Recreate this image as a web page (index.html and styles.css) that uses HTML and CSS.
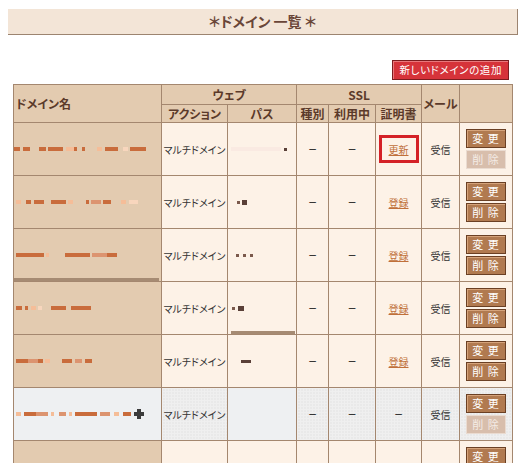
FILE: index.html
```html
<!DOCTYPE html>
<html lang="ja">
<head>
    <meta charset="UTF-8">
    <title>ドメイン一覧</title>
    <link rel="stylesheet" href="styles.css">
</head>
<body>
    <div class="title">＊ドメイン 一覧 ＊</div>

    <div class="toolbar">
        <span class="add-btn">新しいドメインの追加</span>
    </div>

    <table class="domains">
        <colgroup>
            <col style="width:148px">
            <col style="width:66px">
            <col style="width:69px">
            <col style="width:32px">
            <col style="width:47px">
            <col style="width:46px">
            <col style="width:38px">
            <col style="width:53px">
        </colgroup>
        <thead>
            <tr class="head1">
                <th rowspan="2" class="name">ドメイン名</th>
                <th colspan="2">ウェブ</th>
                <th colspan="3">SSL</th>
                <th rowspan="2">メール</th>
                <th rowspan="2"></th>
            </tr>
            <tr class="head2">
                <th>アクション</th>
                <th>パス</th>
                <th>種別</th>
                <th>利用中</th>
                <th>証明書</th>
            </tr>
        </thead>
        <tbody>
            <!-- ドメイン名・パスはぼかし表示 -->
            <tr>
                <td class="name"><span class="blur"><i class="d" style="width:6px"></i><i class="g" style="width:3px"></i><i class="d" style="width:7px"></i><i class="g" style="width:9px"></i><i class="d" style="width:7px"></i><i class="g" style="width:2px"></i><i class="d" style="width:15px"></i><i class="g" style="width:3px"></i><i class="l" style="width:8px"></i><i class="d" style="width:3px"></i><i class="g" style="width:5px"></i><i class="d" style="width:3px"></i><i class="g" style="width:12px"></i><i class="l" style="width:5px"></i><i class="g" style="width:3px"></i><i class="d" style="width:13px"></i><i class="g" style="width:5px"></i><i class="p" style="width:5px"></i><i class="g" style="width:2px"></i><i class="d" style="width:16px"></i></span></td>
                <td>マルチドメイン</td>
                <td class="path"><span class="blur"><i class="f" style="width:50px"></i><i class="g" style="width:3px"></i><i class="k" style="width:3px;height:3px"></i></span></td>
                <td class="dash">–</td>
                <td class="dash">–</td>
                <td><span class="mark"><a href="#">更新</a></span></td>
                <td>受信</td>
                <td class="ops"><span class="btn">変 更</span><span class="btn off">削 除</span></td>
            </tr>
            <tr>
                <td class="name"><span class="blur"><i class="g" style="width:2px"></i><i class="l" style="width:5px"></i><i class="g" style="width:5px"></i><i class="d" style="width:5px"></i><i class="g" style="width:3px"></i><i class="d" style="width:10px"></i><i class="g" style="width:7px"></i><i class="d" style="width:15px"></i><i class="g" style="width:2px"></i><i class="l" style="width:5px"></i><i class="g" style="width:13px"></i><i class="d" style="width:3px"></i><i class="g" style="width:2px"></i><i class="m" style="width:10px"></i><i class="g" style="width:2px"></i><i class="d" style="width:8px"></i><i class="g" style="width:10px"></i><i class="l" style="width:5px"></i><i class="g" style="width:3px"></i><i class="p" style="width:9px"></i></span></td>
                <td>マルチドメイン</td>
                <td class="path"><span class="blur"><i class="g" style="width:6px"></i><i class="k2" style="width:3px;height:3px"></i><i class="g" style="width:2px"></i><i class="k" style="width:5px;height:5px"></i></span></td>
                <td class="dash">–</td>
                <td class="dash">–</td>
                <td><a href="#">登録</a></td>
                <td>受信</td>
                <td class="ops"><span class="btn">変 更</span><span class="btn">削 除</span></td>
            </tr>
            <tr>
                <td class="name bar"><span class="blur"><i class="g" style="width:2px"></i><i class="d" style="width:28px"></i><i class="g" style="width:2px"></i><i class="l" style="width:3px"></i><i class="g" style="width:16px"></i><i class="d" style="width:25px"></i><i class="g" style="width:2px"></i><i class="m" style="width:15px"></i><i class="d" style="width:10px"></i></span></td>
                <td>マルチドメイン</td>
                <td class="path"><span class="blur"><i class="g" style="width:5px"></i><i class="k2" style="width:3px;height:3px"></i><i class="g" style="width:4px"></i><i class="k2" style="width:3px;height:3px"></i><i class="g" style="width:4px"></i><i class="k2" style="width:3px;height:3px"></i></span></td>
                <td class="dash">–</td>
                <td class="dash">–</td>
                <td><a href="#">登録</a></td>
                <td>受信</td>
                <td class="ops"><span class="btn">変 更</span><span class="btn">削 除</span></td>
            </tr>
            <tr>
                <td class="name"><span class="blur"><i class="g" style="width:2px"></i><i class="d" style="width:6px"></i><i class="g" style="width:3px"></i><i class="d" style="width:3px"></i><i class="g" style="width:3px"></i><i class="l" style="width:5px"></i><i class="g" style="width:2px"></i><i class="p" style="width:4px"></i><i class="g" style="width:9px"></i><i class="d" style="width:15px"></i><i class="g" style="width:5px"></i><i class="d" style="width:20px"></i></span></td>
                <td>マルチドメイン</td>
                <td class="path bar"><span class="blur"><i class="g" style="width:1px"></i><i class="k2" style="width:3px;height:3px"></i><i class="g" style="width:3px"></i><i class="k" style="width:6px;height:5px"></i></span></td>
                <td class="dash">–</td>
                <td class="dash">–</td>
                <td><a href="#">登録</a></td>
                <td>受信</td>
                <td class="ops"><span class="btn">変 更</span><span class="btn">削 除</span></td>
            </tr>
            <tr>
                <td class="name"><span class="blur"><i class="g" style="width:2px"></i><i class="d" style="width:12px"></i><i class="m" style="width:10px"></i><i class="d" style="width:5px"></i><i class="g" style="width:2px"></i><i class="l" style="width:5px"></i><i class="g" style="width:12px"></i><i class="d" style="width:10px"></i><i class="g" style="width:3px"></i><i class="m" style="width:7px"></i><i class="g" style="width:3px"></i><i class="d" style="width:7px"></i></span></td>
                <td>マルチドメイン</td>
                <td class="path"><span class="blur"><i class="g" style="width:10px"></i><i class="k" style="width:10px;height:3px"></i></span></td>
                <td class="dash">–</td>
                <td class="dash">–</td>
                <td><a href="#">登録</a></td>
                <td>受信</td>
                <td class="ops"><span class="btn">変 更</span><span class="btn">削 除</span></td>
            </tr>
            <tr class="gray">
                <td class="name"><span class="blur"><i class="g" style="width:2px"></i><i class="l" style="width:5px"></i><i class="g" style="width:3px"></i><i class="d" style="width:12px"></i><i class="m" style="width:12px"></i><i class="g" style="width:3px"></i><i class="l" style="width:3px"></i><i class="g" style="width:5px"></i><i class="m" style="width:7px"></i><i class="g" style="width:3px"></i><i class="l" style="width:3px"></i><i class="g" style="width:3px"></i><i class="d" style="width:22px"></i><i class="g" style="width:3px"></i><i class="m" style="width:10px"></i><i class="g" style="width:4px"></i><i class="l" style="width:5px"></i><i class="g" style="width:4px"></i><i class="d" style="width:8px"></i><i class="g" style="width:3px"></i><i class="x"></i></span></td>
                <td class="dot">マルチドメイン</td>
                <td class="path"></td>
                <td class="dot dash">–</td>
                <td class="dot dash">–</td>
                <td class="dot dash">–</td>
                <td class="dot">受信</td>
                <td class="ops dot"><span class="btn">変 更</span><span class="btn off">削 除</span></td>
            </tr>
            <tr>
                <td class="name"><span class="blur"><i class="g" style="width:2px"></i><i class="d" style="width:8px"></i><i class="g" style="width:4px"></i><i class="m" style="width:12px"></i><i class="g" style="width:6px"></i><i class="d" style="width:14px"></i><i class="g" style="width:8px"></i><i class="l" style="width:10px"></i></span></td>
                <td>マルチドメイン</td>
                <td class="path"><span class="blur"><i class="g" style="width:8px"></i><i class="k2" style="width:3px;height:3px"></i></span></td>
                <td class="dash">–</td>
                <td class="dash">–</td>
                <td><a href="#">登録</a></td>
                <td>受信</td>
                <td class="ops"><span class="btn">変 更</span><span class="btn">削 除</span></td>
            </tr>
        </tbody>
    </table>
</body>
</html>
```

FILE: styles.css
```css
body {
    margin: 9px 1px 0 8px;
    font-family: "Noto Sans CJK JP", sans-serif;
    background-color: #ffffff;
}

.title {
    height: 25px;
    line-height: 25px;
    text-align: center;
    font-size: 14px;
    font-weight: bold;
    color: #6a4638;
    background-color: #f3e5d7;
    border-right: 1px solid #9c8470;
    border-bottom: 1px solid #9c8470;
    font-feature-settings: "palt";
}

.toolbar {
    display: flex;
    justify-content: flex-end;
    margin: 25px 9px 0 0;
}

.add-btn {
    display: inline-block;
    height: 18px;
    line-height: 18px;
    padding: 0 6px 0 7px;
    font-size: 10.5px;
    letter-spacing: 0.6px;
    color: #ffffff;
    background-color: #d6333a;
    border: 1px solid #7c1c1f;
    box-shadow: inset 1px 1px 0 #e9787c;
    font-feature-settings: "palt";
}

.domains {
    margin: 4px 0 0 5px;
    width: 499px;
    border-collapse: collapse;
    table-layout: fixed;
}

.domains th {
    background-color: #e3cbb0;
    border: 1px solid #a4876f;
    color: #5b3a2a;
    font-size: 12px;
    font-weight: bold;
    padding: 0;
    font-feature-settings: "palt";
}

.domains .head1 th {
    height: 19px;
}

.domains .head2 th {
    height: 17px;
}

.domains th.name {
    text-align: left;
    padding-left: 2px;
}

.domains td {
    height: 52px;
    padding: 0;
    border: 1px solid #a4876f;
    background-color: #fdf2e7;
    text-align: center;
    vertical-align: middle;
    font-size: 10px;
    color: #333333;
    font-feature-settings: "palt";
}

.domains td.dash {
    font-family: "Liberation Sans", sans-serif;
    font-size: 12px;
    color: #2a2a2a;
}

.domains td.name {
    text-align: left;
    background-color: #e3cbb0;
    padding-left: 0;
}

.domains td.path {
    text-align: left;
    padding-left: 3px;
}

/* ぼかし由来の太い線 */
.domains td.name.bar {
    background-image: linear-gradient(#a68b73, #a68b73);
    background-size: 145px 3px;
    background-position: left bottom;
    background-repeat: no-repeat;
}

.domains td.path.bar {
    background-image: linear-gradient(#a68b73, #a68b73);
    background-size: 64px 3px;
    background-position: 3px bottom;
    background-repeat: no-repeat;
}

.domains a {
    color: #c0703a;
    text-decoration: underline;
}

/* ぼかしたドメイン名 */
.blur {
    display: flex;
    align-items: center;
    height: 6px;
}

.blur i {
    display: block;
    height: 4px;
    flex: none;
}

.blur .d { background-color: #c96c3c; }
.blur .m { background-color: #dc9470; }
.blur .l { background-color: #f5bd98; }
.blur .p { background-color: #f8d6bd; }
.blur .f { background-color: #faeae2; }
.blur .k { background-color: #5a4038; }
.blur .k2 { background-color: #7b5a4c; }
.blur .g { background-color: transparent; }

.blur .x {
    width: 10px;
    height: 10px;
    background:
        linear-gradient(#3b3b3b, #3b3b3b) 3px 0 / 4px 10px no-repeat,
        linear-gradient(#3b3b3b, #3b3b3b) 0 3px / 10px 4px no-repeat;
    background-color: transparent;
}

.domains tr.gray td.name,
.domains tr.gray td.path {
    background-color: #eef0f2;
}

.domains tr.gray td.name {
    border-bottom: 1px dotted #a4876f;
}

.domains td.dot {
    background-color: #efefef;
    background-image: radial-gradient(#d6d6d6 0.8px, transparent 1px);
    background-size: 3px 3px;
}

.mark {
    display: inline-block;
    padding: 5px 7px 4px;
    border: 3px solid #d42127;
    line-height: 13px;
}

.ops .btn {
    display: block;
    width: 38px;
    height: 17px;
    line-height: 17px;
    margin: 0 auto;
    font-size: 11px;
    color: #ffffff;
    text-align: center;
    letter-spacing: 1px;
    background-color: #b17a50;
    border: 1px solid #6b4024;
    box-shadow: inset 1px 1px 0 #d5a37b;
}

.ops .btn + .btn {
    margin-top: 2px;
}

.ops .btn.off {
    color: #f4ece6;
    background-color: #d8beac;
    border-color: #eadbd0;
    box-shadow: none;
}
```
